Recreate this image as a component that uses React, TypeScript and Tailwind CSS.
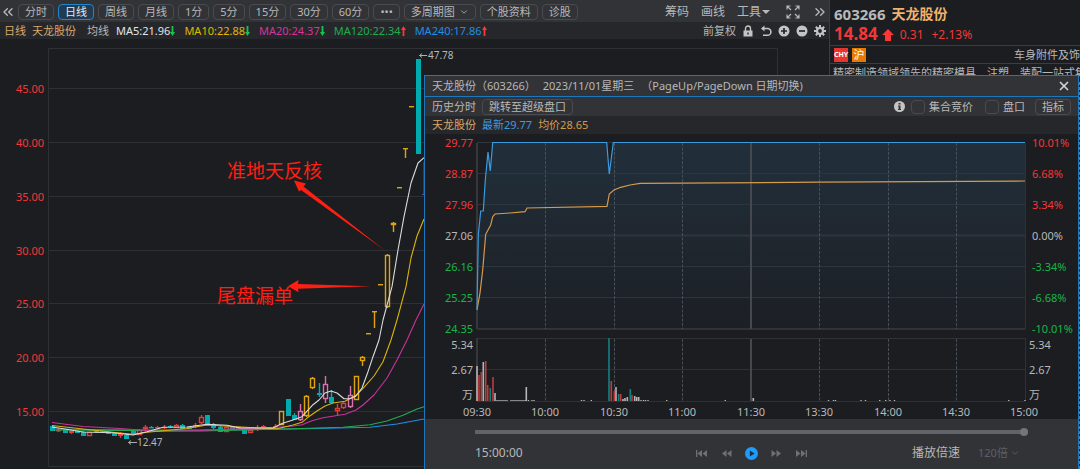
import React from 'react';
import { ChevronDown, ChevronsLeft, ChevronsRight, X } from 'lucide-react';

const periods = ['分时', '日线', '周线', '月线', '1分', '5分', '15分', '30分', '60分', '•••'];

const averages = [
  { label: 'MA5:21.96', color: 'text-[#e4e4e4]', up: false },
  { label: 'MA10:22.88', color: 'text-[#e0b800]', up: false },
  { label: 'MA20:24.37', color: 'text-[#d4359c]', up: false },
  { label: 'MA120:22.34', color: 'text-[#1fae4d]', up: true },
  { label: 'MA240:17.86', color: 'text-[#1f8fe6]', up: true },
];

const TEAL = '#00abb0';
const RED = '#e33a3a';
const YELLOW = '#e0a50c';
const PINK = '#dd6fae';

// x, wick top, body top, body bottom, wick bottom, color, filled
type Candle = [number, number, number, number, number, string, boolean];

const candles: Candle[] = [
  [52.3, 425, 426, 431, 431, TEAL, true],
  [58.7, 428, 430, 431, 432, RED, true],
  [65, 430, 430, 433, 433, TEAL, true],
  [71, 430, 431, 433, 434, RED, true],
  [77.3, 430, 431, 433, 433, TEAL, true],
  [83.5, 431, 432, 436, 436, TEAL, true],
  [89.7, 432, 432, 436, 436, RED, false],
  [96, 430, 431, 432, 433, TEAL, true],
  [102, 430, 431, 432, 433, RED, true],
  [108.3, 431, 432, 434, 434, TEAL, true],
  [114.5, 432, 433, 436, 436, TEAL, true],
  [120.7, 432, 434, 436, 438, RED, true],
  [126.8, 434, 435, 439, 439, TEAL, true],
  [133, 430, 431, 434, 434, TEAL, true],
  [139.3, 429, 430, 435, 435, RED, false],
  [145.5, 425, 427, 429, 430, RED, false],
  [151.7, 426, 427, 428, 428, TEAL, true],
  [157.8, 426, 427, 428, 429, RED, true],
  [164, 425, 427, 428, 429, RED, true],
  [170, 425, 426, 427, 428, TEAL, true],
  [176.4, 424, 425, 428, 428, RED, false],
  [182.6, 424, 425, 429, 429, TEAL, true],
  [189, 426, 427, 429, 429, TEAL, true],
  [195, 423, 425, 427, 428, RED, true],
  [201.3, 415, 417, 423, 424, RED, false],
  [207.5, 415, 415, 425, 425, TEAL, true],
  [213.7, 423, 424, 428, 429, TEAL, true],
  [220, 426, 427, 432, 432, TEAL, true],
  [226, 427, 427, 432, 432, RED, false],
  [232.2, 427, 427, 429, 430, TEAL, true],
  [238.5, 427, 427, 430, 430, TEAL, true],
  [244.5, 429, 429, 434, 434, TEAL, true],
  [250.7, 430, 430, 433, 433, RED, false],
  [257, 425, 428, 430, 431, RED, true],
  [263.3, 425, 426, 428, 429, RED, true],
  [269.5, 427, 427, 430, 430, TEAL, true],
  [275.7, 424, 426, 427, 428, RED, true],
  [281.7, 411, 411, 425, 425, YELLOW, false],
  [288, 399, 399, 416, 416, TEAL, true],
  [294, 413, 415, 420, 420, TEAL, true],
  [300.3, 404, 411, 420, 421, PINK, false],
  [306.7, 395, 396, 416, 417, YELLOW, false],
  [312.7, 377, 378, 388, 389, YELLOW, false],
  [319, 383, 393, 395, 397, TEAL, true],
  [325, 376, 384, 399, 403, PINK, false],
  [331.3, 390, 397, 403, 403, TEAL, true],
  [337.3, 404, 408, 411, 415, RED, false],
  [343.7, 401, 403, 408, 409, RED, false],
  [350, 386, 395, 407, 408, PINK, false],
  [356, 376, 376, 400, 400, YELLOW, false],
  [362.3, 356, 357, 361, 366, YELLOW, false],
  [368.5, 333, 333, 334, 334, YELLOW, true],
  [374.5, 311, 311, 312, 328, YELLOW, true],
  [380.7, 284, 284, 285, 285, YELLOW, true],
  [387, 254, 255, 307, 308, YELLOW, false],
  [393.2, 222, 223, 225, 232, YELLOW, false],
  [399.3, 187, 187, 188, 188, YELLOW, true],
  [405.5, 148, 148, 149, 158, YELLOW, true],
  [411.7, 106, 106, 107, 107, YELLOW, true],
  [418, 59, 59, 154, 154, TEAL, true],
];

const maLines = [
  { color: '#1f8fe6', points: '52,429 130,430 200,430 293,429 370,427.3 397,424 424,419' },
  { color: '#1fae4d', points: '52,430 200,431 293,428.7 343,427.3 370,424.7 387,421 403,415.3 417,409 424,406.7' },
  { color: '#c9339b', points: '52,422.5 83,426.5 120,428.5 160,431.5 200,430.5 230,429 273,427.5 293,426 302,424.7 312,420.7 323,417.7 345,414.3 356,410 363,405 374,395 387,378 397,360 407,340 416,320 424,304' },
  { color: '#d9b40a', points: '52,425.5 83,429 120,433 133,434.3 147,432.3 187,428.5 207,425 233,426.5 250,427.5 277,428.7 293,425 302,422.3 308,417.3 317,411 325,406 333,403 345,401.3 356,395.3 363,388.3 374,376 383,361.7 391,340 397,320 406,286.7 411,258 417,236 424,219' },
  { color: '#dcdcdc', points: '52,427 65,429 83,432 113,432.7 133,435 147,431.7 163,427.3 187,427 207,424.3 227,425.3 240,428 273,428 282,423.5 293,420 302,416.7 313,404.7 319,400 325,393 331,391 337,393 344,398.7 350,398.7 356,396 362,388 368,371.7 373,356.7 379,340 383,320 392,286.7 398,250 404,216.7 411,183 418,163 424,157.7' },
];

const priceTicks: [string, number][] = [
  ['45.00', 89], ['40.00', 143], ['35.00', 197], ['30.00', 251], ['25.00', 304], ['20.00', 358], ['15.00', 412],
];

const intradayTicks: [string, string, number, string][] = [
  ['29.77', '10.01%', 143, '#f23838'],
  ['28.87', '6.68%', 174, '#f23838'],
  ['27.96', '3.34%', 205, '#f23838'],
  ['27.06', '0.00%', 236, '#b8b8b8'],
  ['26.16', '-3.34%', 267, '#16b648'],
  ['25.25', '-6.68%', 298, '#16b648'],
  ['24.35', '-10.01%', 329, '#16b648'],
];

const times: [string, number][] = [
  ['09:30', 477], ['10:00', 545], ['10:30', 614], ['11:00', 682], ['11:30', 751],
  ['13:30', 819], ['14:00', 888], ['14:30', 956], ['15:00', 1024],
];

// x, top, color
const volumes: [number, number, string][] = [
  [477, 366, '#b5b5b5'], [479, 375, '#c23a3a'], [481.3, 372, '#c23a3a'], [483.3, 362, '#b5b5b5'],
  [485.7, 361, '#c23a3a'], [487.7, 385, '#c23a3a'], [490.3, 388, '#138084'], [493, 377, '#c23a3a'],
  [495, 393, '#b5b5b5'], [526.3, 387, '#b5b5b5'], [609, 338, '#138084'], [611.3, 381, '#c23a3a'],
  [614.3, 391, '#c23a3a'], [616, 387, '#b5b5b5'], [618.7, 394, '#138084'], [620.7, 394, '#c23a3a'],
  [623, 399, '#b5b5b5'], [625, 398, '#b5b5b5'], [627.3, 397, '#b5b5b5'], [630.3, 389, '#138084'],
  [632, 395, '#c23a3a'], [634.7, 396, '#b5b5b5'], [636.7, 397, '#b5b5b5'], [638.7, 397, '#b5b5b5'],
  [753.3, 398, '#b5b5b5'],
];

const quietMinutes = [
  497, 499, 501, 503, 505, 507, 511, 513, 515, 517, 519, 521, 523, 525, 528.5, 532, 534, 581.5, 584, 591.3,
  641, 643.5, 645.5, 648, 666.7, 725.3, 828.5, 833.5, 835.5, 861, 865.5, 879.7, 885.7, 890, 894.5, 1008.7, 1025,
];

const Arrow: React.FC<{ up: boolean }> = ({ up }) => (
  <svg viewBox="0 0 5 10" className="h-[10px] w-[5px] shrink-0">
    {up ? (
      <path d="M2.5 0 5 4H3.4v6H1.6V4H0z" fill="#ff3636" />
    ) : (
      <path d="M2.5 10 5 6H3.4V0H1.6v6H0z" fill="#16c44e" />
    )}
  </svg>
);

const KLineChart: React.FC = () => (
  <svg viewBox="0 39 829 430" className="block w-full" fontSize="11">
    <path d="M48.5 466.5V48.5H777.5V466.5Z" fill="none" stroke="#2f3035" />
    {priceTicks.map(([label, y]) => (
      <g key={label}>
        <path d={`M48 ${y - 0.5}H777`} stroke="#2f3035" />
        <text x="44" y={y + 4} textAnchor="end" fill="#f23838">{label}</text>
      </g>
    ))}
    {candles.map(([x, high, top, bottom, low, color, filled]) => {
      const left = Math.round(x - 2.5);
      return (
        <g key={x} stroke={color} strokeWidth="1.4">
          <path d={`M${left + 2.5} ${high}V${top}M${left + 2.5} ${bottom}V${low}`} />
          {filled ? (
            <rect x={left} y={top} width="5" height={Math.max(bottom - top, 1.4)} fill={color} stroke="none" />
          ) : (
            <rect x={left + 0.5} y={top + 0.5} width="4" height={bottom - top - 1} fill="none" />
          )}
        </g>
      );
    })}
    {maLines.map((line) => (
      <polyline key={line.color} points={line.points} fill="none" stroke={line.color} strokeWidth="1.1" strokeLinejoin="round" />
    ))}
    <path d="M424 162V195M422 194.5H424" stroke="#5a4fb0" />
    <g fill="none" stroke="#b0b0b0">
      <path d="M427 55.5H419.5M422 53.5 419.5 55.5 422 57.5" />
      <path d="M137 442.5H128.5M131 440.5 128.5 442.5 131 444.5" />
    </g>
    <g fill="#b8b8b8" fontSize="10">
      <text x="428" y="59">47.78</text>
      <text x="137" y="446">12.47</text>
    </g>
    <g fill="#ff1f12">
      <path d="M294 180.5 306 183.5 303.5 186.5 385 250.5 301 190 299 191.5Z" />
      <path d="M288 286.3 298.5 280 298 284 371 286.3 298 288.8 298.5 292.3Z" />
      <g fontSize="19">
        <text x="227" y="178">准地天反核</text>
        <text x="217" y="303">尾盘漏单</text>
      </g>
    </g>
  </svg>
);

const IntradayChart: React.FC = () => (
  <svg viewBox="425 134 653 285" className="block w-full" fontSize="11">
    <defs>
      <linearGradient id="area" x1="0" y1="0" x2="0" y2="1">
        <stop offset="0" stopColor="#3d8fc4" stopOpacity="0.16" />
        <stop offset="1" stopColor="#3d8fc4" stopOpacity="0.02" />
      </linearGradient>
    </defs>
    <path
      d="M477 310 478.3 235 480.7 211H483.3L485.3 180 488 152 490.3 171 492.7 143H606.7L609.3 174 613.3 143H1025V329H477Z"
      fill="url(#area)"
    />
    {intradayTicks.map(([price, percent, y, color]) => (
      <g key={price} fill={color}>
        <path d={`M477 ${y - 0.5}H1025`} stroke="#2f353c" strokeWidth={y === 236 ? 2 : 1} />
        <text x="473" y={y + 4} textAnchor="end">{price}</text>
        <text x="1032" y={y + 4}>{percent}</text>
      </g>
    ))}
    <path d="M477 329H1025" stroke="#2f3238" strokeWidth="2" />
    <path d="M477 338.5H1025M477 369.5H1025M477 401.5H1025M1025.5 143V329M1025.5 338V401" stroke="#303136" />
    <path d="M477 143V329M477 338V401" stroke="#34373c" strokeWidth="2" />
    {times.map(([label, x]) => (
      <g key={label}>
        {x > 477 && x < 1024 && x !== 751 && (
          <path d={`M${x + 0.5} 143V329M${x + 0.5} 339V401`} stroke="#47505a" strokeDasharray="3 1.5" />
        )}
        <text x={x} y="416" textAnchor="middle" fill="#b8b8b8">{label}</text>
      </g>
    ))}
    <path d="M751 143V329M751 339V401" stroke="#45484e" strokeWidth="2" />
    <g fill="#b8b8b8">
      <g textAnchor="end">
        <text x="473" y="349">5.34</text>
        <text x="473" y="374">2.67</text>
        <text x="473" y="399">万</text>
      </g>
      <text x="1029" y="349">5.34</text>
      <text x="1029" y="374">2.67</text>
      <text x="1029" y="399">万</text>
    </g>
    {volumes.map(([x, top, color]) => (
      <rect key={x} x={x - 0.8} y={top} width="1.6" height={401 - top} fill={color} />
    ))}
    {quietMinutes.map((x) => (
      <rect key={x} x={x - 0.7} y="400" width="1.4" height="1" fill="#b5b5b5" />
    ))}
    <polyline
      points="477,310 480,293 482.7,270 485.7,234.3 490.7,225 492.7,216.7 495,214 510,213 525,211.7 527,208 607,206.3 609.3,194 614,190 620.7,187.3 630,185 640,183.3 820,182.2 1025,181"
      fill="none"
      stroke="#d69a4c"
      strokeWidth="1.2"
    />
    <polyline
      points="477,309 478.3,235 480.7,211 483.3,211 485.3,180 488,152 490.3,171 492.7,142.5 606.7,142.5 609.3,174 613.3,142.5 1025,142.5"
      fill="none"
      stroke="#3b9be0"
      strokeWidth="1.2"
    />
  </svg>
);

const PlaybackButton: React.FC<{ label: string; d: string; active?: boolean }> = ({ label, d, active }) => (
  <button aria-label={label} className="h-[13px] w-[13px]">
    <svg viewBox="0 0 13 13" className="h-[13px] w-[13px]">
      {active && <circle cx="6.5" cy="6.5" r="6.5" fill="#1e9bff" />}
      <path d={d} fill={active ? '#2a2b30' : '#6f7076'} />
    </svg>
  </button>
);

const HistoryDialog: React.FC = () => (
  <section className="absolute top-[75px] right-px bottom-0 left-[424px] flex flex-col border-x border-t border-[#1b78bd] bg-[#1c1d21]">
    <header className="flex h-[21px] shrink-0 items-center justify-between border-b border-[#1b78bd] bg-[#323337] pr-[7px] pl-[7px]">
      <h2 className="flex gap-[7px] whitespace-nowrap">
        <span>天龙股份（603266）</span>
        <span>2023/11/01星期三</span>
        <span>（PageUp/PageDown 日期切换)</span>
      </h2>
      <button aria-label="关闭"><X className="h-[14px] w-[14px] text-[#d0d0d0]" strokeWidth={3} /></button>
    </header>
    <div className="flex h-[19px] shrink-0 items-center bg-[#323337] pr-[7px] pl-[7px]">
      <span>历史分时</span>
      <button className="ml-[6px] flex h-4 items-center rounded-sm border border-[#4a4b50] px-[6px]">跳转至超级盘口</button>
      <svg viewBox="0 0 11 11" className="mr-[6px] ml-auto h-[11px] w-[11px]">
        <circle cx="5.5" cy="5.5" r="5.5" fill="#c4c4c4" />
        <path d="M4.5 2h2v1.6h-2zM4 4.6h2.5v3.3H7V9H4V7.9h.6V5.6H4z" fill="#323337" />
      </svg>
      <label className="mr-3 flex items-center gap-1">
        <input type="checkbox" className="h-[14px] w-[14px] appearance-none rounded-sm border border-[#4a4b50]" />
        集合竞价
      </label>
      <label className="mr-[10px] flex items-center gap-1">
        <input type="checkbox" className="h-[14px] w-[14px] appearance-none rounded-sm border border-[#4a4b50]" />
        盘口
      </label>
      <button className="flex h-4 items-center rounded-sm border border-[#4a4b50] px-[6px]">指标</button>
    </div>
    <div className="flex h-[18px] shrink-0 items-center gap-[6px] bg-[#26272b] pl-[7px]">
      <span className="text-[#d9a86c]">天龙股份</span>
      <span className="text-[#3b9be0]">最新29.77</span>
      <span className="text-[#d69a4c]">均价28.65</span>
    </div>
    <IntradayChart />
    <footer className="flex flex-1 flex-col bg-[#323337] px-[50px] pt-2">
      <input
        type="range"
        aria-label="回放进度"
        defaultValue={100}
        className="h-[10px] w-full appearance-none bg-transparent [&::-webkit-slider-runnable-track]:h-[4px] [&::-webkit-slider-runnable-track]:bg-[#62636a] [&::-webkit-slider-thumb]:-mt-[2px] [&::-webkit-slider-thumb]:h-2 [&::-webkit-slider-thumb]:w-2 [&::-webkit-slider-thumb]:appearance-none [&::-webkit-slider-thumb]:rounded-full [&::-webkit-slider-thumb]:bg-[#74757b]"
      />
      <div className="mt-2 grid grid-cols-[1fr_auto_1fr] items-center">
        <span className="text-xs">15:00:00</span>
        <div className="flex gap-3">
          <PlaybackButton label="开头" d="M1 3h1.3v7H1zM7 3v7L2.5 6.5zM12 3v7L7.5 6.5z" />
          <PlaybackButton label="后退" d="M6.5 3v7L2 6.5zM11.5 3v7L7 6.5z" />
          <PlaybackButton label="播放" d="M4.8 3.6v5.8L9.6 6.5z" active />
          <PlaybackButton label="前进" d="M1.5 3v7L6 6.5zM6.5 3v7L11 6.5z" />
          <PlaybackButton label="结尾" d="M1 3v7l4.5-3.5zM6 3v7l4.5-3.5zM10.7 3H12v7h-1.3z" />
        </div>
        <label className="flex items-center justify-end pr-2">
          <span className="mr-[18px] text-xs">播放倍速</span>
          <select className="w-[32px] appearance-none bg-transparent text-[#5f6066]">
            <option>120倍</option>
          </select>
          <ChevronDown className="h-[10px] w-[10px] text-[#5f6066]" />
        </label>
      </div>
    </footer>
  </section>
);

const QuotePanel: React.FC = () => (
  <aside className="flex w-[251px] shrink-0 flex-col overflow-hidden border-l border-[#3c3d42] whitespace-nowrap">
    <div className="flex h-6 items-end gap-[6px] pl-1 leading-5 font-bold">
      <span className="text-[15px]">603266</span>
      <span className="text-sm leading-5 text-[#f0b36c]">天龙股份</span>
    </div>
    <div className="flex h-[22px] items-center border-b border-[#3c3d42] pl-1 text-xs text-[#f23838]">
      <span className="text-[17px] font-bold">14.84</span>
      <svg viewBox="0 0 12 12" className="mr-[6px] ml-1 h-3 w-3">
        <path d="M6 0 12 6H9v6H3V6H0z" fill="#ff3636" />
      </svg>
      <span className="mr-2">0.31</span>
      <span>+2.13%</span>
    </div>
    <div className="flex h-[18px] items-center gap-1 border-b border-[#3c3d42] pl-1">
      <span className="flex h-[14px] w-[14px] items-center justify-center bg-[#e8332f] text-[7px] font-bold text-white">CHY</span>
      <span className="flex h-[14px] w-[14px] items-center justify-center bg-[#e87a00] text-[11px] text-white">沪</span>
      <span className="ml-auto">车身附件及饰</span>
    </div>
    <p className="pl-[3px] leading-[18px]">精密制造领域领先的精密模具、注塑、装配一站式集</p>
    <div className="flex-1 border-r border-dashed border-[#4d7ea6]" />
  </aside>
);

export default function App() {
  return (
    <div className="relative flex h-screen overflow-hidden bg-[#1c1d21] font-['Noto_Sans','Noto_Sans_CJK_SC',sans-serif] text-[11px] leading-4 text-[#b8b8b8]">
      <main className="flex min-w-0 flex-1 flex-col">
        <nav className="flex h-[22px] shrink-0 items-center gap-1 bg-[#323337] pt-[2px] pr-px whitespace-nowrap">
          <button aria-label="收起" className="w-[14px]"><ChevronsLeft className="h-4 w-4" /></button>
          {periods.map((period) => (
            <button
              key={period}
              className={
                period === '日线'
                  ? 'flex h-4 items-center rounded-sm border border-[#1f86c9] bg-[#213c52] px-[6px] text-[#e8e8e8]'
                  : 'flex h-4 items-center rounded-sm border border-[#4a4b50] px-[6px]'
              }
            >
              {period}
            </button>
          ))}
          <button className="flex h-4 items-center gap-1 rounded-sm border border-[#4a4b50] px-[6px]">
            多周期图
            <ChevronDown className="h-[10px] w-[10px]" />
          </button>
          <button className="flex h-4 items-center rounded-sm border border-[#4a4b50] px-[6px]">个股资料</button>
          <button className="flex h-4 items-center rounded-sm border border-[#4a4b50] px-[6px]">诊股</button>
          <div className="ml-auto flex items-center gap-3 text-xs leading-4">
            <button>筹码</button>
            <button>画线</button>
            <button className="flex items-center gap-px">
              工具
              <svg viewBox="0 0 8 4" className="h-1 w-2"><path d="M0 0h8L4 4z" fill="#b8b8b8" /></svg>
            </button>
            <button aria-label="全屏" className="ml-1">
              <svg viewBox="0 0 14 14" className="h-[14px] w-[14px]" fill="none" stroke="#b8b8b8" strokeWidth="1.2">
                <path d="M1 4.5V1h3.5M1 1l4 4M9.5 1H13v3.5M13 1 9 5M1 9.5V13h3.5M1 13l4-4M13 9.5V13H9.5M13 13 9 9" />
              </svg>
            </button>
            <button aria-label="展开"><ChevronsRight className="h-4 w-4" /></button>
          </div>
        </nav>
        <div className="flex h-[17px] shrink-0 items-center bg-[#26272b] pr-[3px] pl-1 whitespace-nowrap">
          <span className="mr-[6px] text-[#d9a86c]">日线</span>
          <span className="mr-[11px] text-[#d9a86c]">天龙股份</span>
          <span className="mr-[7px]">均线</span>
          {averages.map((ma) => (
            <span key={ma.label} className={`mr-[9px] flex items-center ${ma.color}`}>
              {ma.label}
              <Arrow up={ma.up} />
            </span>
          ))}
          <div className="ml-auto flex items-center gap-[6px]">
            <button>前复权</button>
            <button aria-label="锁定">
              <svg viewBox="0 0 12 12" className="h-3 w-3">
                <path d="M3.5 6V3.5a2.5 2.5 0 0 1 5 0V6" fill="none" stroke="#c4c4c4" strokeWidth="1.4" />
                <path d="M1.5 5.5h9V11.5h-9zM5.3 7.5v2h1.4v-2z" fill="#c4c4c4" fillRule="evenodd" />
              </svg>
            </button>
            <button aria-label="撤销">
              <svg viewBox="0 0 12 12" className="h-3 w-3" fill="none" stroke="#c4c4c4" strokeWidth="1.6">
                <path d="M2 3.5h5.5a3.2 3.2 0 0 1 0 6.8H3" />
                <path d="M4.5.5 1 3.5l3.5 3z" fill="#c4c4c4" stroke="none" />
              </svg>
            </button>
            <button aria-label="放大">
              <svg viewBox="0 0 12 12" className="h-3 w-3">
                <circle cx="6" cy="6" r="5.5" fill="#c4c4c4" />
                <path d="M6 3v6M3 6h6" stroke="#26272b" strokeWidth="1.7" />
              </svg>
            </button>
            <button aria-label="缩小">
              <svg viewBox="0 0 12 12" className="h-3 w-3">
                <circle cx="6" cy="6" r="5.5" fill="#c4c4c4" />
                <path d="M3 6h6" stroke="#26272b" strokeWidth="1.7" />
              </svg>
            </button>
            <button aria-label="设置">
              <svg viewBox="0 0 12 12" className="h-3 w-3" fill="none" stroke="#c4c4c4">
                <circle cx="6" cy="6" r="3" strokeWidth="2.2" />
                <path d="M6 0v2.5M6 9.5V12M0 6h2.5M9.5 6H12M1.8 1.8l1.7 1.7M8.5 8.5l1.7 1.7M1.8 10.2l1.7-1.7M8.5 3.5l1.7-1.7" strokeWidth="2" />
              </svg>
            </button>
          </div>
        </div>
        <KLineChart />
      </main>
      <QuotePanel />
      <HistoryDialog />
    </div>
  );
}
